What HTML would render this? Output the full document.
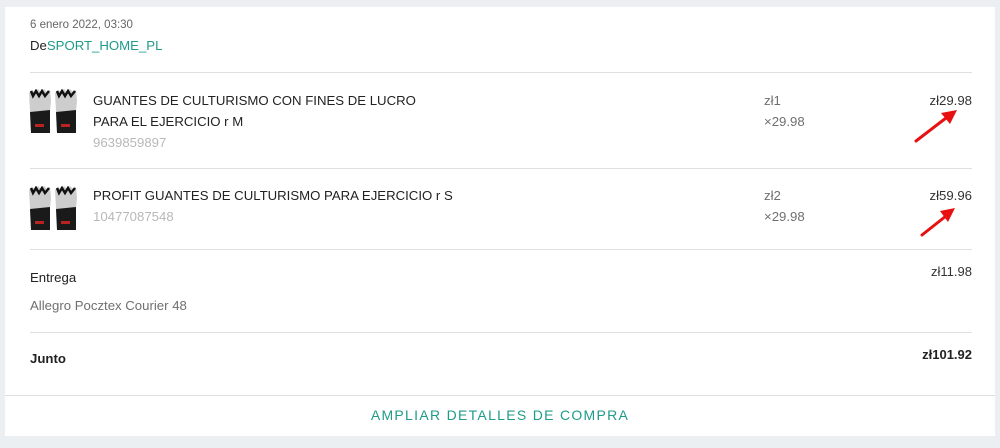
<!DOCTYPE html>
<html><head><meta charset="utf-8"><style>
*{margin:0;padding:0;box-sizing:border-box}
body{width:1000px;height:448px;background:#eceff1;font-family:"Liberation Sans",sans-serif;position:relative;overflow:hidden;color:#222}
.card{position:absolute;left:5px;top:7px;width:990px;height:429px;background:#fff}
.t{position:absolute;white-space:nowrap;line-height:1}
.hr{position:absolute;left:30px;width:942px;height:1px;background:#e0e0e0}
.g{color:#6f6f6f}.l{color:#b8b8b8}
.r{right:28px;text-align:right}
.f{font-size:13.2px}
</style></head><body>
<div class="card"></div>
<div class="t" style="left:30px;top:20px;font-size:11.5px;color:#666">6 enero 2022, 03:30</div>
<div class="t f" style="left:30px;top:39px">De<span style="color:#1f9b8a">SPORT_HOME_PL</span></div>
<div class="hr" style="top:72px"></div>

<svg style="position:absolute;left:28px;top:89px" width="50" height="46" viewBox="0 0 50 46">
<defs><g id="gl"><path d="M1 4 L4 1 L7 3 L10 0 L13 3 L16 0 L19 3 L22 1 L23 12 L22 22 L22 44 L3 44 L2 22 Z" fill="#cdcdcd"/>
<path d="M2 23 L22 21 L22 44 L3 44 Z" fill="#1a1a1a"/>
<path d="M3 2 L5 7 L8 2 L11 7 L14 2 L17 7 L21 2" stroke="#111" stroke-width="2.5" fill="none"/>
<rect x="7" y="35" width="9" height="3" fill="#b22"/></g></defs>
<use href="#gl"/><use href="#gl" transform="translate(26,0)"/>
</svg>
<svg style="position:absolute;left:28px;top:186px" width="50" height="46" viewBox="0 0 50 46">
<use href="#gl"/><use href="#gl" transform="translate(26,0)"/>
</svg>

<div class="t f" style="left:93px;top:94px">GUANTES DE CULTURISMO CON FINES DE LUCRO</div>
<div class="t f" style="left:93px;top:115px">PARA EL EJERCICIO r M</div>
<div class="t l f" style="left:93px;top:136px">9639859897</div>
<div class="t g f" style="left:764px;top:94px">zł1</div>
<div class="t g f" style="left:764px;top:115px">×29.98</div>
<div class="t r f" style="top:94px;color:#333">zł29.98</div>
<div class="hr" style="top:168px"></div>

<div class="t f" style="left:93px;top:189px">PROFIT GUANTES DE CULTURISMO PARA EJERCICIO r S</div>
<div class="t l f" style="left:93px;top:210px">10477087548</div>
<div class="t g f" style="left:764px;top:189px">zł2</div>
<div class="t g f" style="left:764px;top:210px">×29.98</div>
<div class="t r f" style="top:189px;color:#333">zł59.96</div>
<div class="hr" style="top:249px"></div>

<svg style="position:absolute;left:0;top:0" width="1000" height="448">
<line x1="916" y1="141" x2="946" y2="118" stroke="#e81010" stroke-width="3" stroke-linecap="round"/>
<polygon points="957,110 941,113 950,124" fill="#e81010"/>
<line x1="922" y1="235" x2="946" y2="216" stroke="#e81010" stroke-width="3" stroke-linecap="round"/>
<polygon points="955,208 940,211 948,222" fill="#e81010"/>
</svg>

<div class="t f" style="left:30px;top:271px">Entrega</div>
<div class="t g f" style="left:30px;top:299px">Allegro Pocztex Courier 48</div>
<div class="t r" style="top:265px;font-size:13px;color:#333">zł11.98</div>
<div class="hr" style="top:332px"></div>
<div class="t f" style="left:30px;top:352px;font-weight:bold">Junto</div>
<div class="t r" style="top:348px;font-size:13px;font-weight:bold">zł101.92</div>
<div style="position:absolute;left:5px;top:395px;width:990px;height:1px;background:#e0e0e0"></div>
<div class="t" style="left:0;width:1000px;text-align:center;top:408px;font-size:14px;letter-spacing:1.3px;color:#1f9b8a">AMPLIAR DETALLES DE COMPRA</div>
</body></html>
